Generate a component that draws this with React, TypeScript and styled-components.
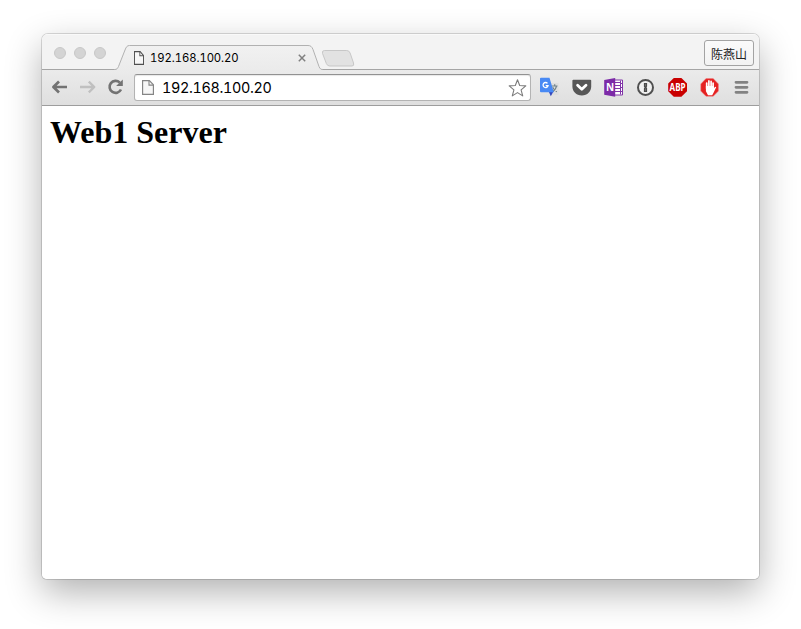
import React from 'react';
import styled, { createGlobalStyle } from 'styled-components';

const GlobalStyle = createGlobalStyle`
  * { box-sizing: border-box; }
  html, body { margin: 0; background: #fff; }
  body { overflow: hidden; }
  svg { display: block; flex: none; overflow: visible; }
`;

const Desktop = styled.div`
  width: 801px;
  height: 629px;
  padding: 34px 42px 50px;
  background: #fff;
`;

const Window = styled.main`
  width: 717px;
  height: 545px;
  display: flex;
  flex-direction: column;
  overflow: hidden;
  border-radius: 6px 6px 5px 5px;
  background: #fff;
  box-shadow: 0 0 0 1px rgba(0, 0, 0, 0.14), 0 13px 36px rgba(0, 0, 0, 0.31);
`;

const TabStrip = styled.header`
  height: 36px;
  flex: none;
  display: flex;
  align-items: flex-start;
  background: #f3f3f3;
  box-shadow: inset 0 1px #f9f9f9, inset 0 -1px #a5a5a5;
`;

const TrafficLights = styled.div`
  display: flex;
  gap: 8px;
  padding: 13px 0 0 12px;
  width: 74px;
`;

const Light = styled.span`
  width: 12px;
  height: 12px;
  border-radius: 50%;
  border: 1px solid #c8c8c8;
  background: #d4d4d4;
`;

const Tab = styled.div`
  position: relative;
  width: 206px;
  height: 25px;
  margin-top: 11px;
  display: flex;
  align-items: center;
  padding: 1px 16px 0 18px;
`;

const TabShape = styled.svg`
  position: absolute;
  left: 0;
  top: 0;
`;

const TabTitle = styled.span`
  position: relative;
  flex: 1;
  margin-left: 6px;
  font: 400 11.3px/16px Inter, sans-serif;
  font-variant-numeric: tabular-nums;
  letter-spacing: -0.08px;
  color: #000;
  white-space: nowrap;
`;

const Layer = styled.span`
  position: relative;
`;

const NewTab = styled.div`
  margin: 16px 0 0 -1px;
`;

const Profile = styled.button`
  width: 50px;
  height: 26px;
  margin: 6px 5px 0 auto;
  padding: 1px 0 0;
  border: 1px solid #a3a3a3;
  border-radius: 3px;
  background: linear-gradient(#fafafa, #f3f3f3);
  color: #222;
  font: 400 12px/24px "Noto Sans CJK SC", sans-serif;
  white-space: nowrap;
`;

const Toolbar = styled.nav`
  height: 36px;
  flex: none;
  display: flex;
  align-items: center;
  padding: 0 6px 0 9px;
  background: linear-gradient(#ebebeb, #dfdfdf);
  border-bottom: 1px solid #9d9d9d;
`;

const NavButtons = styled.div`
  display: flex;
  flex: none;
  gap: 10px;
  width: 83px;
  margin-bottom: 1px;
`;

const AddressBar = styled.div`
  width: 397px;
  height: 27px;
  flex: none;
  display: flex;
  align-items: center;
  padding: 0 3px 0 7px;
  border: 1px solid #b3b3b3;
  border-top-color: #929292;
  border-radius: 3px;
  background: #fff;
  box-shadow: inset 0 1px 1px #e8e8e8;
`;

const Url = styled.span`
  flex: 1;
  margin: 1px 0 0 8px;
  font: 400 14.4px/20px Inter, sans-serif;
  font-variant-numeric: tabular-nums;
  letter-spacing: -0.33px;
  color: #000;
`;

const Extensions = styled.div`
  display: flex;
  gap: 12px;
  margin: 0 0 1px 9px;
`;

const Page = styled.section`
  flex: 1;
  padding: 8px;
  background: #fff;
`;

const Heading = styled.h1`
  margin: 0;
  font: 700 32px/36px "Liberation Serif", serif;
  color: #000;
`;

const FileIcon = ({ width, height, color }: { width: number; height: number; color: string }) => (
  <svg width={width} height={height} viewBox="0 0 12 14" preserveAspectRatio="none">
    <path d="M.6.6h6.8l4 3.9v8.9H.6Z" fill="#f7f7f7" stroke={color} strokeWidth="1.15" />
    <path d="M7 1v3.8h4.2" fill="none" stroke={color} strokeWidth="1.1" />
  </svg>
);

const Arrow = ({ forward }: { forward?: boolean }) => (
  <svg width="18" height="18" viewBox="0 0 18 18" fill="none" stroke={forward ? '#c0c0c0' : '#737373'} strokeWidth={forward ? 2.3 : 2.7} strokeLinejoin="round">
    {forward
      ? <path d="M1 9h14M9.8 3.7 15.3 9l-5.5 5.3" />
      : <path d="M16 9H3M8 3.5 2.4 9 8 14.5" />}
  </svg>
);

const Reload = () => (
  <svg width="18" height="18" viewBox="0 0 18 18">
    <path d="M12.8 4.6A6 6 0 1 0 14 11.5" fill="none" stroke="#737373" strokeWidth="2.6" />
    <path d="M15.8 1.5V8H9.1Z" fill="#737373" />
  </svg>
);

const Star = () => (
  <svg width="18" height="18" viewBox="0 0 18 18">
    <path d="m8.5.7 2.2 5.8 6.1.4-4.7 4 1.6 6-5.2-3.3-5.2 3.3 1.6-6-4.7-4 6.1-.4Z" fill="#fff" stroke="#7b7b7b" strokeWidth="1.1" strokeLinejoin="round" />
  </svg>
);

const IconLabel = styled.text`
  font-family: "Open Sans", sans-serif;
  font-weight: 700;
  fill: #fff;
`;

const Translate = () => (
  <svg width="20" height="20" viewBox="0 0 20 20">
    <path d="M8 6h10.5v12H11Z" fill="#dedede" />
    <path d="M11.5 9h6M14.7 7.2V9M16.5 9c-.4 2.5-2 4.5-4 5.7M12.7 10.3c.9 2 2.3 3.6 4.2 4.5" stroke="#71838b" strokeWidth="1.2" fill="none" />
    <path d="M8.5 14h5.2l-2.9 5.2Z" fill="#3448bd" />
    <path d="M1 .8h8.5l4.3 14.4H1a1 1 0 0 1-1-1V1.8a1 1 0 0 1 1-1Z" fill="#4889f4" />
    <path d="M7.5 6.4A2.5 2.5 0 1 0 8 8.7H5.7" fill="none" stroke="#fff" strokeWidth="1.3" />
  </svg>
);

const Pocket = () => (
  <svg width="20" height="20" viewBox="0 0 20 20">
    <path d="M1.4 2.8h16.8q1 0 1 1v5.5c0 5.2-3.8 9.2-9.4 9.2S.4 14.5.4 9.3V3.8q0-1 1-1Z" fill="#575757" />
    <path d="m5.6 8.2 4.2 4 4.2-4" fill="none" stroke="#fff" strokeWidth="2.8" strokeLinecap="round" strokeLinejoin="round" />
  </svg>
);

const OneNote = () => (
  <svg width="20" height="20" viewBox="0 0 20 20">
    <path d="M10 3h8.5v15H10Z" fill="#fff" stroke="#8136a8" />
    <path d="M10 5.5h6M10 8.5h6M10 11.5h6M10 14.5h6M16.5 3.5v14M16 6.5h3M16 10.5h3M16 14.5h3" stroke="#8136a8" strokeWidth="1" />
    <path d="m.2 3.1 11-2.1v18.8l-11-2.1Z" fill="#7c2aa7" />
    <IconLabel x="2" y="14" fontSize="10">N</IconLabel>
  </svg>
);

const OnePassword = () => (
  <svg width="20" height="20" viewBox="0 0 20 20">
    <circle cx="9.5" cy="10.4" r="7.5" fill="#f0f0f0" stroke="#505050" strokeWidth="2" />
    <path d="M7.9 5.9h3.2v3.5l-.7.8.7.8v3.9H7.9v-3.5l.7-.8-.7-.8Z" fill="#4a4a4a" />
    <path d="M9.5 6.9v2.4M9.5 11.4v2.7" stroke="#858585" strokeWidth=".6" />
  </svg>
);

const Adblock = () => (
  <svg width="20" height="20" viewBox="0 0 20 20">
    <path d="M5.8 1h7.6L19 6.6v7.7l-5.6 5.5H5.8L.2 14.3V6.6Z" fill="#c90000" />
    <IconLabel x="9.6" y="14" fontSize="9.8" textAnchor="middle" textLength="16" lengthAdjust="spacingAndGlyphs">ABP</IconLabel>
  </svg>
);

const StopHand = () => (
  <svg width="20" height="20" viewBox="0 0 20 20">
    <path d="M6 1.6h7.2L18.4 6.9v7.2l-5.2 5.2H6L.8 14.1V6.9Z" fill="#e52222" stroke="#ef7d7d" strokeWidth=".5" />
    <path d="M6.7 11.4V6M8.9 10.4V3.9M11.1 10.4V4.4M13.1 11.4V6" stroke="#fff" strokeWidth="1.7" strokeLinecap="round" />
    <path d="M5.9 8.9h8v2.4l1-1.2q1-.8 1.3.1l-2.4 5-1.6 3H8l-2.1-4Z" fill="#fff" />
  </svg>
);

const Menu = () => (
  <svg width="20" height="20" viewBox="0 0 20 20">
    <path d="M4 5.3h11M4 10.3h11M4 15.3h11" stroke="#828282" strokeWidth="2.8" strokeLinecap="round" />
  </svg>
);

export default function App() {
  return (
    <>
      <GlobalStyle />
      <Desktop>
        <Window>
          <TabStrip>
            <TrafficLights><Light /><Light /><Light /></TrafficLights>
            <Tab>
              <TabShape width="206" height="25" viewBox="0 0 206 25">
                <defs>
                  <linearGradient id="tab-fill" x2="0" y2="1">
                    <stop stopColor="#f1f1f1" /><stop offset="1" stopColor="#ebebeb" />
                  </linearGradient>
                </defs>
                <path d="M-1.5 25v-.5c2.5 0 3-1 4-3L9 5C10.2 2 11 .5 13.5.5H192c2.5 0 3.8 1 5 4l6 17c1 2.5 2 3 4 3v.5Z" fill="url(#tab-fill)" />
                <path d="M-1.5 24.5c2.5 0 3-1 4-3L9 5C10.2 2 11 .5 13.5.5H192c2.5 0 3.8 1 5 4l6 17c1 2.5 2 3 4 3" fill="none" stroke="#b1b1b1" />
              </TabShape>
              <Layer><FileIcon width={10} height={14} color="#505050" /></Layer>
              <TabTitle>192.168.100.20</TabTitle>
              <Layer>
                <svg width="8" height="8" viewBox="0 0 8 8"><path d="m.8.8 6.4 6.4m0-6.4L.8 7.2" stroke="#808080" strokeWidth="1.5" /></svg>
              </Layer>
            </Tab>
            <NewTab>
              <svg width="33" height="17" viewBox="0 0 34 17" preserveAspectRatio="none">
                <path d="M3.5.5h23q2.5 0 3.5 2.5l3.5 10q1 3-1.5 3H9q-2.5 0-3.5-2.5L1.6 3.5Q.8.5 3.5.5Z" fill="#e2e2e2" stroke="#c6c6c6" />
              </svg>
            </NewTab>
            <Profile>陈燕山</Profile>
          </TabStrip>
          <Toolbar>
            <NavButtons><Arrow /><Arrow forward /><Reload /></NavButtons>
            <AddressBar>
              <FileIcon width={12} height={15} color="#858585" />
              <Url>192.168.100.20</Url>
              <Star />
            </AddressBar>
            <Extensions>
              <Translate /><Pocket /><OneNote /><OnePassword /><Adblock /><StopHand /><Menu />
            </Extensions>
          </Toolbar>
          <Page><Heading>Web1 Server</Heading></Page>
        </Window>
      </Desktop>
    </>
  );
}
